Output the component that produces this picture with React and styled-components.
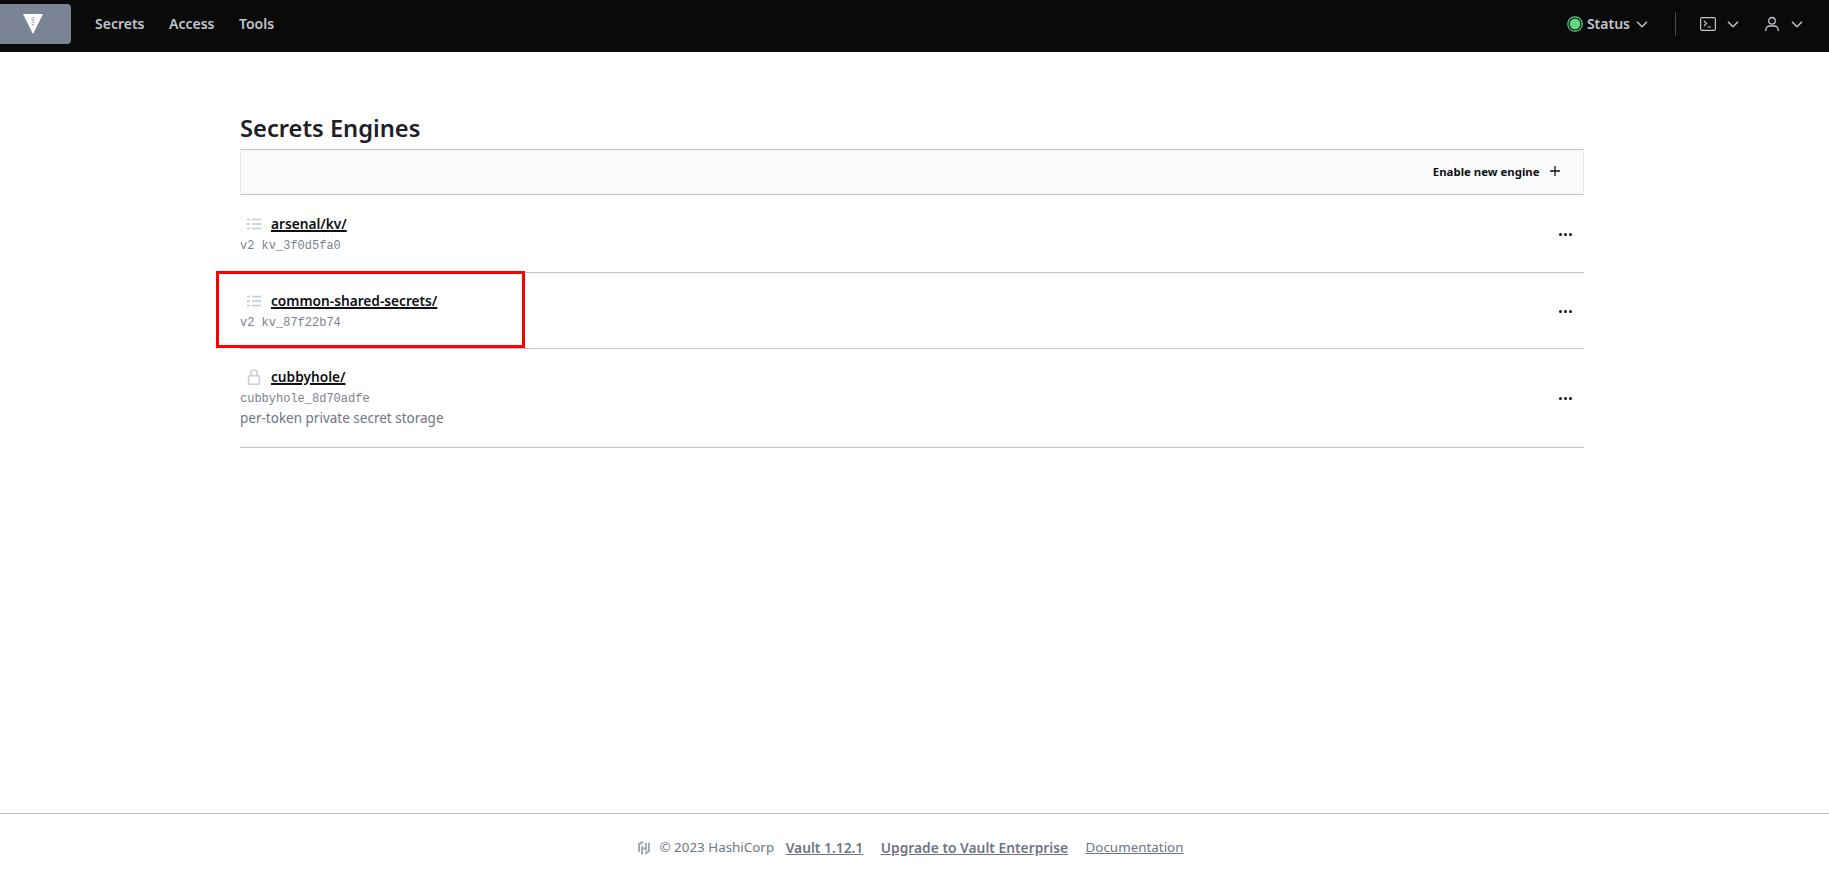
import React from "react";
import styled, { createGlobalStyle } from "styled-components";

const Global = createGlobalStyle`
  html, body { margin: 0; padding: 0; background: #fff; }
  body { font-family: "Noto Sans", "Open Sans", sans-serif; color: #1f2430; }
  a { color: inherit; }
`;
const Page = styled.div`
  height: 878px; display: flex; flex-direction: column; overflow: hidden; position: relative;
`;
const Nav = styled.header`
  height: 52px; flex: none; background: #0a0a0a; display: flex; align-items: center; box-sizing: border-box; padding-bottom: 4px;
`;
const LogoButton = styled.div`
  width: 71px; height: 40px; box-sizing: border-box; padding-right: 5px; background: #7b8495; border-radius: 0 4px 4px 0;
  display: flex; align-items: center; justify-content: center; margin-right: 24px;
`;
const NavLinks = styled.nav`
  display: flex; gap: 24.5px; flex: 1;
`;
const NavLink = styled.a`
  font-size: 14px; font-weight: 600; color: #c2c5cc; line-height: 20px;
`;
const NavRight = styled.div`
  display: flex; align-items: center; color: #c2c5cc; padding-right: 25px;
`;
const StatusLabel = styled.span`
  font-size: 14px; font-weight: 600; margin: 0 5px 0 4px; padding-bottom: 2px;
`;
const Divider = styled.div`
  width: 1px; height: 24px; background: #4a4d55; margin: 0 24px 0 26px;
`;
const IconGroup = styled.div`
  display: flex; align-items: center; gap: 10px; margin-left: ${p => p.$gap || 0}px;
`;
const Main = styled.main`
  flex: 1; padding: 0 245px 0 240px;
`;
const Title = styled.h1`
  margin: 0; padding-top: 60px; height: 97px; box-sizing: border-box; font-size: 23.7px; font-weight: 600; line-height: 32px; color: #1d2027; white-space: nowrap;
`;
const Toolbar = styled.div`
  height: 46px; box-sizing: border-box; background: #fafafa;
  border: 1px solid #bfc1d2; border-left-color: #e6e7ee; border-right-color: #e6e7ee;
  display: flex; align-items: center; justify-content: flex-end; padding: 0 22px 2px 0; gap: 9.5px;
`;
const ToolbarAction = styled.span`
  font-size: 11.4px; font-weight: 700; color: #0f1115;
`;
const Row = styled.div`
  height: ${p => p.$height}px; box-sizing: border-box; border-bottom: 1px solid #c2c3d2;
  display: flex; align-items: center; justify-content: space-between; padding-right: 12px;
`;
const RowBody = styled.div`
  display: flex; flex-direction: column; padding: ${p => p.$raised ? "0 0 3px" : "3px 0 0"};
`;
const RowHead = styled.div`
  display: flex; align-items: center; height: 22px; padding-left: 7px; gap: 10px;
`;
const EngineName = styled.a`
  font-size: 13.7px; font-weight: 600; color: #0d0f13; text-decoration: underline; text-decoration-thickness: 1.5px; line-height: 20px;
`;
const Accessor = styled.code`
  font-family: "Liberation Mono", monospace; font-size: 12px; color: #7c8190; line-height: 21px; margin-top: 1px; display: block;
`;
const Description = styled.p`
  margin: -1px 0 0; font-size: 13.5px; color: #6f7585; line-height: 19px;
`;
const Dots = styled.div`
  display: flex; gap: 2px; margin-top: 1px;
`;
const Dot = styled.i`
  width: 3px; height: 3px; border-radius: 50%; background: #0d0f13; display: block;
`;
const Footer = styled.footer`
  height: 65px; flex: none; border-top: 1px solid #b9bcc6; display: flex; align-items: center; justify-content: center; box-sizing: border-box;
  font-size: 13.4px; color: #6f7585; gap: 17.5px; padding: 2px 8px 0 0;
`;
const Copyright = styled.span`
  display: flex; align-items: center; gap: 8px; margin-right: -6px;
`;
const FooterLink = styled.a`
  color: #6f7585; text-decoration: underline; font-weight: ${p => p.$bold ? 600 : 400}; font-size: ${p => p.$bold ? 13.8 : 13.4}px;
`;
const Annotation = styled.div`
  position: absolute; left: 216px; top: 271px; width: 309px; height: 77px; border: 3px solid #f00; box-sizing: border-box; pointer-events: none;
`;

const Chevron = () => (
  <svg width="14" height="14" viewBox="0 0 14 14" fill="none" stroke="#c2c5cc" strokeWidth="1.5"><path d="M2 4.7l5 5 5-5" /></svg>
);
const ListIcon = () => (
  <svg width="14" height="12" viewBox="0 0 14 12" fill="none" stroke="#c5c8d4" strokeWidth="1.5"><path d="M0 1.5h3M0 6h3M0 10.5h3M5 1.5h9M5 6h9M5 10.5h9" /></svg>
);
const LockIcon = () => (
  <svg width="14" height="16" viewBox="0 0 14 16" fill="none" stroke="#cbced8" strokeWidth="1.6"><rect x="1.6" y="6.8" width="10.8" height="8.4" rx="1.4" /><path d="M4 6.8V4a3 3 0 0 1 6 0v2.8" /></svg>
);

export default function App() {
  return (
    <Page>
      <Global />
      <Nav>
        <LogoButton>
          <svg width="20" height="20" viewBox="0 0 20 20"><path d="M0 0h20L10 20z" fill="#fff" /><path d="M8.5 4h3M8.5 6.2h3M8.5 8.4h3M9 10.6h2" stroke="#9aa0ad" strokeWidth="1" /></svg>
        </LogoButton>
        <NavLinks>
          <NavLink>Secrets</NavLink>
          <NavLink>Access</NavLink>
          <NavLink>Tools</NavLink>
        </NavLinks>
        <NavRight>
          <svg width="16" height="16" viewBox="0 0 16 16"><circle cx="8" cy="8" r="7.2" fill="none" stroke="#5fd97f" strokeWidth="1.2" /><circle cx="8" cy="8" r="5.4" fill="#5fd97f" /></svg>
          <StatusLabel>Status</StatusLabel>
          <Chevron />
          <Divider />
          <IconGroup>
            <svg width="16" height="16" viewBox="0 0 16 16" fill="none" stroke="#c2c5cc" strokeWidth="1.2"><rect x="0.6" y="1.6" width="14.8" height="12.8" rx="1.6" /><path d="M4 5l2.5 2.5L4 10M7.5 11H11" /></svg>
            <Chevron />
          </IconGroup>
          <IconGroup $gap={24}>
            <svg width="16" height="16" viewBox="0 0 16 16" fill="none" stroke="#c2c5cc" strokeWidth="1.3"><circle cx="8" cy="4.8" r="3.3" /><path d="M1.8 15v-1.2A3.8 3.8 0 0 1 5.6 10h4.8a3.8 3.8 0 0 1 3.8 3.8V15" /></svg>
            <Chevron />
          </IconGroup>
        </NavRight>
      </Nav>
      <Main>
        <Title>Secrets Engines</Title>
        <Toolbar>
          <ToolbarAction>Enable new engine</ToolbarAction>
          <svg width="12" height="12" viewBox="0 0 12 12" stroke="#0f1115" strokeWidth="1.3"><path d="M6 1v10M1 6h10" /></svg>
        </Toolbar>
        <Row $height={78}>
          <RowBody>
            <RowHead><ListIcon /><EngineName>arsenal/kv/</EngineName></RowHead>
            <Accessor>v2 kv_3f0d5fa0</Accessor>
          </RowBody>
          <Dots><Dot /><Dot /><Dot /></Dots>
        </Row>
        <Row $height={76}>
          <RowBody>
            <RowHead><ListIcon /><EngineName>common-shared-secrets/</EngineName></RowHead>
            <Accessor>v2 kv_87f22b74</Accessor>
          </RowBody>
          <Dots><Dot /><Dot /><Dot /></Dots>
        </Row>
        <Row $height={99}>
          <RowBody $raised>
            <RowHead><LockIcon /><EngineName>cubbyhole/</EngineName></RowHead>
            <Accessor>cubbyhole_8d70adfe</Accessor>
            <Description>per-token private secret storage</Description>
          </RowBody>
          <Dots><Dot /><Dot /><Dot /></Dots>
        </Row>
      </Main>
      <Footer>
        <Copyright>
          <svg width="14" height="15" viewBox="0 0 14 15" fill="#a4a9b8"><path d="M6 0.5L1 3.4v8.2l2 1.1V5l3-1.7zM8 2.3v5.1H6V5.6L4 6.7v7.1l2 1.1v-5.5h2v1.8l2-1.1V3.4zM11 2.3v8.2L8 12.2v2.5l5-2.9V3.4z" /></svg>
          © 2023 HashiCorp
        </Copyright>
        <FooterLink $bold>Vault 1.12.1</FooterLink>
        <FooterLink $bold>Upgrade to Vault Enterprise</FooterLink>
        <FooterLink>Documentation</FooterLink>
      </Footer>
      <Annotation />
    </Page>
  );
}
